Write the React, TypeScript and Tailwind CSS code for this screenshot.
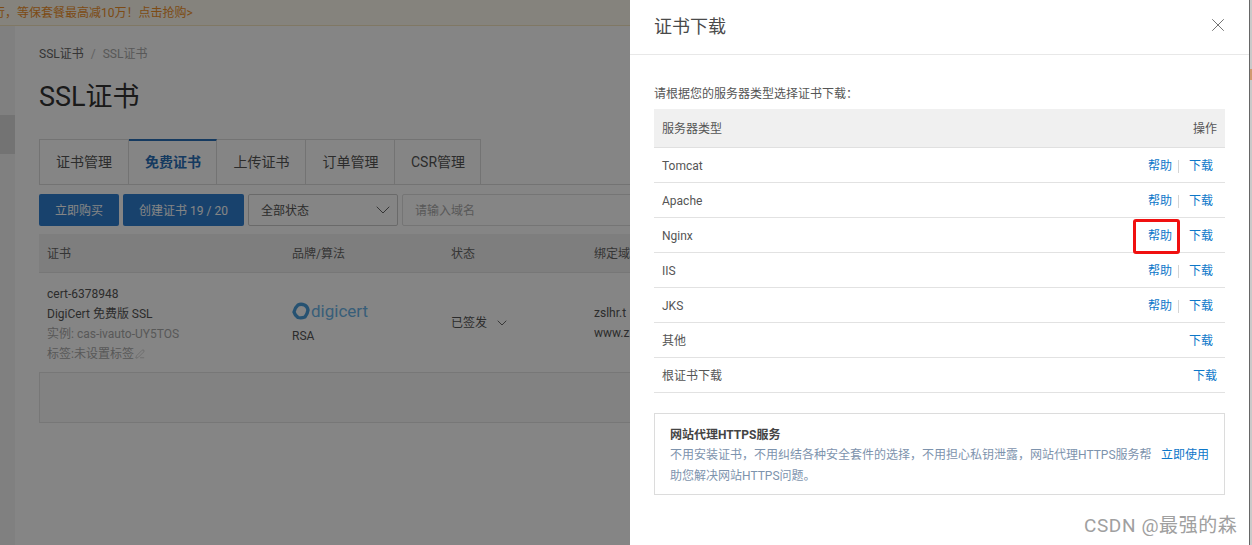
import { ChevronDown, PenLine, X } from "lucide-react";

const font = { fontFamily: 'Roboto, "Noto Sans CJK SC", sans-serif' };

const servers = [
  { name: "Tomcat", help: true },
  { name: "Apache", help: true },
  { name: "Nginx", help: true, noDivider: true },
  { name: "IIS", help: true },
  { name: "JKS", help: true },
  { name: "其他", help: false },
  { name: "根证书下载", help: false, last: true },
];

const tabs = ["证书管理", "免费证书", "上传证书", "订单管理", "CSR管理"];
const tabWidths = ["w-[90px]", "w-[88px]", "w-[89px]", "w-[89px]", "w-[86px]"];

function DigicertLogo() {
  return (
    <div className="flex h-[24px] items-center">
      <svg width="18" height="18" viewBox="0 0 18 18" fill="none" className="mr-[1px]">
        <path
          d="M6 3 Q9 1.5 12.5 3 Q15.5 4.5 16 8 Q15.5 12 13 15 Q9 16.5 6 15.5 Q3 13.5 2 10 Q3 5.5 6 3 Z"
          stroke="#4a9edb"
          strokeWidth="3.4"
          strokeLinejoin="round"
        />
      </svg>
      <span className="text-[17px] leading-none text-[#6bb5e8]">digicert</span>
    </div>
  );
}

function Page() {
  return (
    <div className="flex h-full w-full flex-col bg-white">
      <div className="flex h-[26px] shrink-0 items-center overflow-hidden border-b border-[#f5e6c0] bg-[#fffbf0] pt-[1px] text-[12px] whitespace-nowrap text-[#f0912a]">
        <span className="-ml-[7px]">行，等保套餐最高减10万！点击抢购&gt;</span>
      </div>
      <div className="flex min-h-0 flex-1">
        <div className="w-[15px] shrink-0 bg-[#f5f5f5] pt-[89px]">
          <div className="h-[39px] bg-[#dcdcdc]" />
        </div>
        <div className="min-w-0 flex-1 overflow-hidden pl-[24px]">
          <div className="pt-[20px] text-[12px] leading-[16px] text-[#666]">
            SSL证书<span className="mx-[7px] text-[#bbb]">/</span>
            <span className="text-[#aaa]">SSL证书</span>
          </div>
          <h1 className="mt-[15px] text-[27px] leading-[40px] font-normal text-[#333]">SSL证书</h1>
          <div className="mt-[22px] flex h-[46px] border-b border-[#ddd]">
            {tabs.map((t, i) => (
              <div
                key={t}
                className={`${tabWidths[i]} flex items-center justify-center border-r border-[#ddd] text-[14px] ${
                  i === 1
                    ? "border-t-2 border-t-[#2a6fb8] font-semibold text-[#2a6fb8]"
                    : "border-t border-t-[#ddd] text-[#555]"
                } ${i === 0 ? "border-l" : "pl-[1px]"}`}
              >
                {t}
              </div>
            ))}
          </div>
          <div className="mt-[9px] flex h-[32px] gap-[4px] text-[12px]">
            <button className="w-[80px] rounded-[2px] bg-[#2f7fd1] pt-[1px] text-[#fff]">立即购买</button>
            <button className="w-[121px] rounded-[2px] bg-[#2f7fd1] pt-[1px] text-white">创建证书 19 / 20</button>
            <div className="flex w-[150px] items-center justify-between rounded-[2px] border border-[#ccc] pr-[2px] pl-[12px] text-[#555]">
              <span className="pt-[2px]">全部状态</span>
              <ChevronDown size={24} strokeWidth={1} className="text-[#666]" />
            </div>
            <div className="flex w-[400px] items-center rounded-[2px] border border-[#e0e0e0] pt-[2px] pl-[12px] text-[#aaa]">
              请输入域名
            </div>
          </div>
          <div className="mt-[8px] w-[800px]">
            <div className="flex h-[39px] items-center border-b border-[#e5e5e5] bg-[#f2f2f2] pt-[2px] text-[12px] text-[#666]">
              <div className="w-[253px] pl-[8px]">证书</div>
              <div className="w-[159px]">品牌/算法</div>
              <div className="w-[143px]">状态</div>
              <div className="w-[36px] overflow-hidden whitespace-nowrap">绑定域</div>
            </div>
            <div className="flex h-[100px] items-center border-b border-[#e5e5e5] text-[12px] leading-[20px] text-[#555]">
              <div className="w-[253px] pt-[3px] pl-[8px]">
                <div>cert-6378948</div>
                <div>DigiCert 免费版 SSL</div>
                <div className="text-[#aaa]">实例: cas-ivauto-UY5TOS</div>
                <div className="flex items-center text-[#aaa]">
                  标签:未设置标签
                  <PenLine size={10} strokeWidth={1.2} className="ml-[1px]" />
                </div>
              </div>
              <div className="w-[159px]">
                <DigicertLogo />
                <div className="mt-[3px]">RSA</div>
              </div>
              <div className="flex w-[143px] items-center">
                已签发
                <ChevronDown size={16} strokeWidth={1.3} className="ml-[7px] text-[#555]" />
              </div>
              <div className="w-[36px] overflow-hidden whitespace-nowrap">
                <div>zslhr.t</div>
                <div>www.z</div>
              </div>
            </div>
            <div className="h-[50px] border-x border-b border-[#e5e5e5] bg-[#fafafa]" />
          </div>
        </div>
      </div>
    </div>
  );
}

function Drawer() {
  return (
    <div className="absolute top-0 bottom-0 left-[630px] w-[619px] bg-white text-[12px] text-[#555]">
      <div className="flex h-[55px] items-center justify-between border-b border-[#e8e8e8] pr-[20px] pb-[2px] pl-[24px]">
        <span className="text-[18px] text-[#4a4a4a]">证书下载</span>
        <X size={22} strokeWidth={0.9} className="mb-[2px] text-[#555]" />
      </div>
      <div className="pt-[30px] pr-[24px] pl-[24px]">
        <div className="h-[24px] pt-[1px] leading-[16px] text-[#555]">请根据您的服务器类型选择证书下载：</div>
        <div className="flex h-[39px] items-center justify-between border-b border-[#e0e0e0] bg-[#f0f0f0] pt-[2px] pr-[8px] pl-[8px]">
          <span>服务器类型</span>
          <span>操作</span>
        </div>
        {servers.map((s) => (
          <div
            key={s.name}
            className={`flex h-[35px] items-center justify-between border-b border-[#e2e2e2] pt-[2px] pl-[8px] ${
              s.last ? "pr-[8px]" : "pr-[12px]"
            }`}
          >
            <span>{s.name}</span>
            <span className="flex items-center text-[#0d77c9]">
              {s.help && <span>帮助</span>}
              {s.help && (
                <span
                  className={`mx-[6px] mr-[10px] h-[13px] w-px ${s.noDivider ? "bg-transparent" : "bg-[#d5d5d5]"}`}
                />
              )}
              <span>下载</span>
            </span>
          </div>
        ))}
        <div className="mt-[20px] flex h-[82px] flex-col justify-center border border-[#dcdcdc] pt-[4px] pr-[15px] pl-[15px]">
          <div className="font-bold text-[#444]">网站代理HTTPS服务</div>
          <div className="mt-[1px] flex items-start leading-[21px] text-[#7d93ad]">
            <p className="w-[491px]">
              不用安装证书，不用纠结各种安全套件的选择，不用担心私钥泄露，网站代理HTTPS服务帮助您解决网站HTTPS问题。
            </p>
            <span className="shrink-0 whitespace-nowrap text-[#0d77c9]">立即使用</span>
          </div>
        </div>
      </div>
    </div>
  );
}

// the sliver of the next window visible past the drawer
function EdgeStrip() {
  return (
    <div className="absolute top-0 right-0 bottom-0 w-[3px] border-l border-[#666] bg-[#c9c9c9]">
      <div className="mt-[69px] h-[11px] bg-[#d09a70]" />
    </div>
  );
}

export default function App() {
  return (
    <div className="relative h-[545px] w-[1252px] overflow-hidden" style={font}>
      <Page />
      <div className="absolute inset-0 bg-black/48" />
      <Drawer />
      <EdgeStrip />
      <div className="absolute top-[219px] left-[1133px] h-[35px] w-[47px] rounded-[3px] border-[3px] border-[#f01010]" />
      <div className="absolute top-[512px] left-[1084px] text-[19px] leading-[28px] tracking-[0.6px] whitespace-nowrap text-[#a0a0a0]">
        CSDN @最强的森
      </div>
    </div>
  );
}
